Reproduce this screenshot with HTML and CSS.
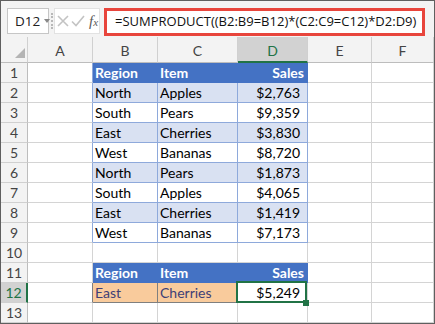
FILE: index.html
```html
<!DOCTYPE html>
<html lang="en">
<head>
    <meta charset="UTF-8">
    <title>SUMPRODUCT example</title>
    <link rel="stylesheet" href="styles.css">
</head>
<body>
    <div class="sheet">
        <div class="formula-bar">
            <div class="name-box">D12<span class="caret"></span></div>
            <div class="sep"></div>
            <div class="fx-tools">
                <svg width="12" height="12" viewBox="0 0 12 12"><path d="M1 1 L11 11 M11 1 L1 11" stroke="#c3c3c3" stroke-width="1.6" fill="none"/></svg>
                <svg width="14" height="12" viewBox="0 0 14 12"><path d="M1 6.5 L5 10.5 L13 1" stroke="#c3c3c3" stroke-width="1.6" fill="none"/></svg>
                <span class="fx">f<i>x</i></span>
            </div>
            <div class="formula">=SUMPRODUCT((B2:B9=B12)*(C2:C9=C12)*D2:D9)</div>
        </div>

        <div class="grid">
            <div class="h corner"><span class="tri"></span></div>
            <div class="h">A</div>
            <div class="h">B</div>
            <div class="h">C</div>
            <div class="h sel">D</div>
            <div class="h">E</div>
            <div class="h">F</div>

            <div class="rn">1</div><div class="c tl"></div>
            <div class="c th">Region</div><div class="c th">Item</div><div class="c th num">Sales</div>
            <div class="c"></div><div class="c"></div>

            <div class="rn">2</div><div class="c tl"></div>
            <div class="c t band">North</div><div class="c t band">Apples</div><div class="c t band num">$2,763</div>
            <div class="c"></div><div class="c"></div>

            <div class="rn">3</div><div class="c tl"></div>
            <div class="c t">South</div><div class="c t">Pears</div><div class="c t num">$9,359</div>
            <div class="c"></div><div class="c"></div>

            <div class="rn">4</div><div class="c tl"></div>
            <div class="c t band">East</div><div class="c t band">Cherries</div><div class="c t band num">$3,830</div>
            <div class="c"></div><div class="c"></div>

            <div class="rn">5</div><div class="c tl"></div>
            <div class="c t">West</div><div class="c t">Bananas</div><div class="c t num">$8,720</div>
            <div class="c"></div><div class="c"></div>

            <div class="rn">6</div><div class="c tl"></div>
            <div class="c t band">North</div><div class="c t band">Pears</div><div class="c t band num">$1,873</div>
            <div class="c"></div><div class="c"></div>

            <div class="rn">7</div><div class="c tl"></div>
            <div class="c t">South</div><div class="c t">Apples</div><div class="c t num">$4,065</div>
            <div class="c"></div><div class="c"></div>

            <div class="rn">8</div><div class="c tl"></div>
            <div class="c t band">East</div><div class="c t band">Cherries</div><div class="c t band num">$1,419</div>
            <div class="c"></div><div class="c"></div>

            <div class="rn">9</div><div class="c tl"></div>
            <div class="c t">West</div><div class="c t">Bananas</div><div class="c t num">$7,173</div>
            <div class="c"></div><div class="c"></div>

            <div class="rn">10</div><div class="c"></div>
            <div class="c"></div><div class="c"></div><div class="c"></div>
            <div class="c"></div><div class="c"></div>

            <div class="rn">11</div><div class="c"></div>
            <div class="c th">Region</div><div class="c th">Item</div><div class="c th num">Sales</div>
            <div class="c"></div><div class="c"></div>

            <div class="rn sel">12</div><div class="c il"></div>
            <div class="c inp">East</div><div class="c inp">Cherries</div><div class="c num active">$5,249</div>
            <div class="c"></div><div class="c"></div>

            <div class="rn">13</div><div class="c"></div>
            <div class="c"></div><div class="c"></div><div class="c"></div>
            <div class="c"></div><div class="c"></div>
        </div>
    </div>
</body>
</html>
```

FILE: styles.css
```css
body {
    margin: 0;
    background: #fff;
}

.sheet {
    width: 433px;
    height: 322px;
    border: 1px solid #5f5f5f;
    overflow: hidden;
    background: #f3f3f3;
    font-family: Lato, "Liberation Sans", sans-serif;
}

/* formula bar */
.formula-bar {
    height: 36px;
    box-sizing: border-box;
    padding-top: 7px;
    display: flex;
    align-items: flex-start;
    font-family: "Open Sans", "Liberation Sans", sans-serif;
}

.name-box {
    margin-left: 6px;
    width: 42px;
    height: 26px;
    box-sizing: border-box;
    border: 1px solid #c6c6c6;
    background: #fff;
    padding-left: 7px;
    font-size: 13.5px;
    line-height: 24px;
    color: #222;
    display: flex;
    align-items: center;
}

.caret {
    margin-left: 4px;
    border-left: 3px solid transparent;
    border-right: 3px solid transparent;
    border-top: 4px solid #888;
}

.sep {
    width: 2px;
    height: 16px;
    margin: 5px 1px 0 2px;
    border-left: 2px dotted #b8b8b8;
    box-sizing: border-box;
}

.fx-tools {
    width: 46px;
    height: 26px;
    box-sizing: border-box;
    background: #fff;
    border: 1px solid #e2e2e2;
    display: flex;
    align-items: center;
    gap: 2px;
    padding-left: 2px;
}

.fx {
    font-family: "Liberation Serif", serif;
    font-style: italic;
    font-size: 15px;
    color: #5a5a5a;
    margin-left: 2px;
}

.fx i {
    font-size: 11px;
}

.formula {
    margin-left: 4px;
    width: 321px;
    height: 28px;
    box-sizing: border-box;
    border: 3px solid #e8453c;
    background: #fff;
    padding-left: 8px;
    font-size: 13px;
    line-height: 21px;
    color: #111;
    white-space: nowrap;
}

/* grid */
.grid {
    display: grid;
    grid-template-columns: 27px 65px 65px 80px 70px 64px 62px;
    grid-template-rows: 26px;
    grid-auto-rows: 20px;
    background: #fff;
}

.c {
    position: relative;
    box-sizing: border-box;
    border-right: 1px solid #d4d4d4;
    border-bottom: 1px solid #d4d4d4;
    padding: 0 2px;
    font-size: 14px;
    line-height: 19px;
    white-space: nowrap;
    overflow: hidden;
    color: #000;
}

.h {
    box-sizing: border-box;
    background: #f3f3f3;
    border-right: 1px solid #d0d0d0;
    border-bottom: 1px solid #bdbdbd;
    text-align: center;
    font-size: 14px;
    line-height: 28px;
    color: #444;
}

.h.sel {
    background: #d2d2d2;
    border-bottom: 2px solid #217346;
    color: #217346;
}

.corner {
    position: relative;
}

.tri {
    position: absolute;
    right: 2px;
    bottom: 4px;
    border-left: 10px solid transparent;
    border-bottom: 10px solid #b4b4b4;
}

.rn {
    box-sizing: border-box;
    background: #f3f3f3;
    border-right: 1px solid #bdbdbd;
    border-bottom: 1px solid #d0d0d0;
    text-align: center;
    font-size: 14px;
    line-height: 19px;
    color: #444;
}

.rn.sel {
    background: #d2d2d2;
    border-right: 2px solid #217346;
    color: #217346;
}

.num {
    text-align: right;
    padding-right: 7px;
}

.tl {
    border-right-color: #8ea9db;
}

.t {
    border-right-color: #8ea9db;
    border-bottom-color: #8ea9db;
}

.band {
    background: #d9e1f2;
}

.th {
    background: #4472c4;
    border-right-color: #4472c4;
    border-bottom-color: #4472c4;
    color: #fff;
    font-weight: bold;
}

.th.num {
    padding-right: 3px;
}

.il {
    border-right-color: #7f7f7f;
}

.inp {
    background: #f9cb9c;
    border-right-color: #7f7f7f;
    border-bottom-color: #7f7f7f;
    color: #3f3f76;
}

.active {
    overflow: visible;
}

.active::after {
    content: "";
    position: absolute;
    left: -2px;
    top: -2px;
    right: 0;
    bottom: -1px;
    border: 2px solid #217346;
}

.active::before {
    content: "";
    position: absolute;
    right: -2px;
    bottom: -4px;
    width: 6px;
    height: 6px;
    background: #217346;
    z-index: 1;
}
```
